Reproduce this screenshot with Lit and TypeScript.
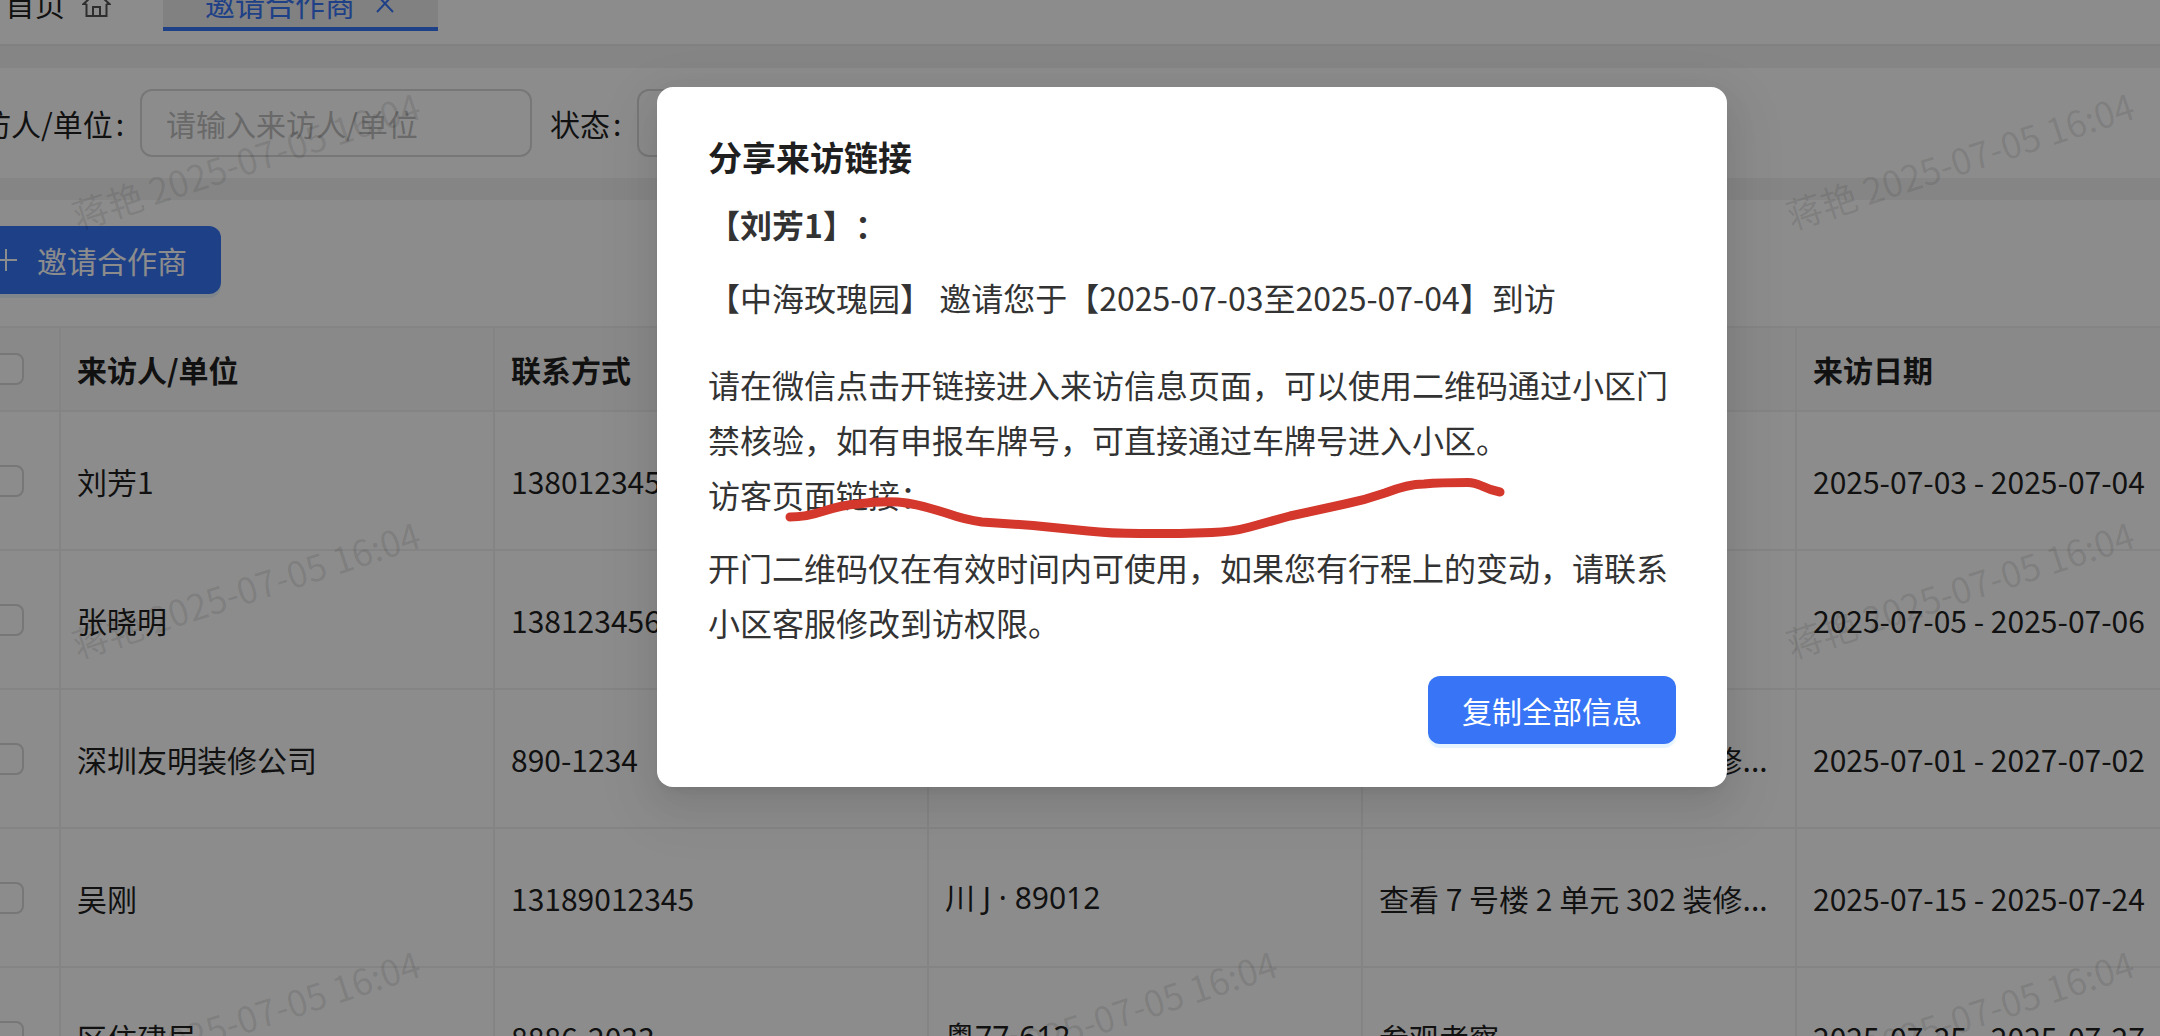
import { LitElement, html, css, svg } from "lit";
import { customElement, state } from "lit/decorators.js";

interface Visitor {
  name: string;
  phone: string;
  plate: string;
  purpose: string;
  period: string;
}

const VISITORS: Visitor[] = [
  { name: "刘芳1", phone: "13801234567", plate: "", purpose: "", period: "2025-07-03 - 2025-07-04" },
  { name: "张晓明", phone: "13812345678", plate: "", purpose: "", period: "2025-07-05 - 2025-07-06" },
  { name: "深圳友明装修公司", phone: "890-1234", plate: "", purpose: "查看 7 号楼 2 单元 302 装修...", period: "2025-07-01 - 2027-07-02" },
  { name: "吴刚", phone: "13189012345", plate: "川 J · 89012", purpose: "查看 7 号楼 2 单元 302 装修...", period: "2025-07-15 - 2025-07-24" },
  { name: "区住建局", phone: "8886-2033", plate: "粤77-612", purpose: "参观考察", period: "2025-07-25 - 2025-07-27" },
];

const WATERMARK = "蒋艳 2025-07-05 16:04";

const homeIcon = svg`<path d="M4.500 15 H1.500 L14.500 3 L27.500 15 H24.500 M4.500 15 V27 H24.500 V15 M11 27 V18 H18 V27" />`;
const closeIcon = svg`<path d="M1 1 L17 18 M17 1 L1 18" />`;
const plusIcon = svg`<path d="M15 4 V26 M4 15 H26" />`;

@customElement("app-root")
export class AppRoot extends LitElement {
  @state() private open = true;

  static styles = css`
    :host {
      display: block;
      position: relative;
      height: 100vh;
      overflow: hidden;
      background: #f3f3f3;
      color: #1f1f1f;
      font-family: "Noto Sans CJK SC", "Liberation Sans", sans-serif;
      font-size: 30px;
      line-height: 48px;
      text-spacing-trim: space-all;
    }
    * {
      box-sizing: border-box;
    }
    button,
    input,
    select {
      font: inherit;
      color: inherit;
      margin: 0;
    }
    svg {
      display: block;
      flex: none;
      fill: none;
      stroke: currentColor;
      stroke-width: 2;
    }
    .page {
      display: flex;
      flex-direction: column;
      gap: 22px;
      margin: -40px 0 0 -75px;
    }
    .topbar {
      display: flex;
      align-items: flex-start;
      height: 86px;
      padding: 19px 0 0 80px;
      background: #fff;
      border-bottom: 2px solid #ececec;
    }
    .tab {
      display: flex;
      align-items: center;
      height: 48px;
      color: inherit;
      text-decoration: none;
    }
    .tab.home {
      gap: 17px;
      padding-right: 52px;
    }
    .tab.home svg {
      color: #555;
    }
    .tab-box {
      display: flex;
      border-bottom: 4px solid #3875f6;
      background: #ececec;
      color: #3875f6;
    }
    .tab-box .tab {
      padding-left: 42px;
    }
    .close {
      display: flex;
      align-items: center;
      padding: 0 44px 0 21px;
      border: 0;
      background: none;
    }
    .filters {
      display: flex;
      align-items: center;
      gap: 18px;
      height: 110px;
      padding: 0 26px;
      background: #fff;
    }
    .field {
      display: flex;
      align-items: center;
      gap: 16px;
    }
    .colon {
      padding-left: 3px;
    }
    .control {
      width: 392px;
      height: 68px;
      padding: 0 24px;
      border: 2px solid #d9d9d9;
      border-radius: 12px;
      background: #fff;
      appearance: none;
    }
    .control::placeholder {
      color: #bfbfbf;
      opacity: 1;
    }
    .list {
      display: flex;
      flex-direction: column;
      align-items: flex-start;
      gap: 32px;
      padding: 26px 0 0 32px;
      background: #fff;
    }
    .primary {
      display: flex;
      align-items: center;
      gap: 16px;
      height: 68px;
      padding: 0 34px;
      border: 0;
      border-radius: 12px;
      background: #3875f6;
      box-shadow: 0 4px 0 rgba(5, 145, 255, 0.1);
      color: #fff;
    }
    .table {
      width: 100%;
      table-layout: fixed;
      border-collapse: separate;
      border-spacing: 0;
      border-top: 2px solid #f0f0f0;
    }
    .check-col {
      width: 104px;
    }
    .wide-col {
      width: 434px;
    }
    th,
    td {
      height: 139px;
      padding: 0 16px;
      border-right: 2px solid #f0f0f0;
      border-bottom: 2px solid #f0f0f0;
      text-align: left;
      white-space: nowrap;
    }
    th:last-child,
    td:last-child {
      border-right: 0;
    }
    th {
      height: 84px;
      background: #fafafa;
      font-weight: 700;
    }
    .check {
      padding: 0;
    }
    .plate {
      font-family: "Noto Sans", "Noto Sans CJK SC", sans-serif;
    }
    .box {
      display: block;
      width: 32px;
      height: 32px;
      margin: 0 auto;
      appearance: none;
      border: 2px solid #d9d9d9;
      border-radius: 8px;
      background: #fff;
    }
    .watermarks {
      position: absolute;
      top: -56px;
      left: -183px;
      display: grid;
      grid-template-columns: repeat(3, 857px);
      grid-auto-rows: 429px;
      place-items: center;
      color: rgba(0, 0, 0, 0.1);
      font-size: 36px;
      pointer-events: none;
    }
    .watermarks span {
      transform: rotate(-18deg);
    }
    .mask {
      position: absolute;
      inset: 0;
      display: flex;
      justify-content: center;
      align-items: flex-start;
      padding: 87px 0 0 224px;
      background: rgba(0, 0, 0, 0.45);
    }
    .dialog {
      position: relative;
      display: flex;
      flex-direction: column;
      width: 1070px;
      padding: 42px 51px 43px;
      border-radius: 16px;
      background: #fff;
      box-shadow:
        0 12px 32px 0 rgba(0, 0, 0, 0.08),
        0 6px 12px -8px rgba(0, 0, 0, 0.12),
        0 18px 56px 16px rgba(0, 0, 0, 0.05);
      color: #333;
      font-size: 32px;
      line-height: 55px;
    }
    .dialog h2 {
      margin: 0 0 12px;
      color: #1f1f1f;
      font-size: 34px;
      font-weight: 700;
      line-height: 56px;
    }
    .dialog p {
      margin: 0 0 18px;
    }
    .dialog .invite {
      margin-bottom: 32px;
    }
    .actions {
      display: flex;
      justify-content: flex-end;
      padding-top: 8px;
      font-size: 30px;
    }
    .scribble {
      position: absolute;
      top: 388px;
      left: 126px;
      stroke: #d4372b;
      stroke-width: 9;
      stroke-linecap: round;
      stroke-linejoin: round;
      pointer-events: none;
    }
  `;

  private close() {
    this.open = false;
  }

  private renderDialog() {
    return html`
      <div class="mask">
        <section class="dialog" role="dialog" aria-modal="true" aria-labelledby="share-title">
          <h2 id="share-title">分享来访链接</h2>
          <p><strong>【刘芳1】：</strong></p>
          <p class="invite">【中海玫瑰园】 邀请您于【2025-07-03至2025-07-04】到访</p>
          <p>
            请在微信点击开链接进入来访信息页面，可以使用二维码通过小区门禁核验，如有申报车牌号，可直接通过车牌号进入小区。<br />访客页面链接：
          </p>
          <p>开门二维码仅在有效时间内可使用，如果您有行程上的变动，请联系小区客服修改到访权限。</p>
          <div class="actions">
            <button class="primary" type="button" @click=${this.close}>复制全部信息</button>
          </div>
          <svg class="scribble" width="730" height="66" viewBox="783 475 730 66" aria-hidden="true">
            <path
              d="M790 517 Q806 517 824 511 T858 504 Q878 501 898 502 Q914 503 946 513 Q966 520 982 522 L1033 525.500 L1088 531 Q1110 533.500 1140 533.500 L1180 533.500 L1212 532.500 Q1232 532 1250 527 L1290 516 L1345 504 Q1365 500 1385 493 Q1408 484 1424 484 Q1440 482.500 1468 482.500 Q1474 482.500 1482 486 Q1490 490 1500 492"
            />
          </svg>
        </section>
      </div>
    `;
  }

  render() {
    return html`
      <div class="page">
        <nav class="topbar">
          <a class="tab home" href="#home">
            首页
            <svg width="29" height="29" viewBox="0 0 29 29" aria-hidden="true">${homeIcon}</svg>
          </a>
          <div class="tab-box">
            <a class="tab" href="#partners">邀请合作商</a>
            <button class="close" type="button" aria-label="关闭">
              <svg width="18" height="19" viewBox="0 0 18 19" aria-hidden="true">${closeIcon}</svg>
            </button>
          </div>
        </nav>

        <form class="filters">
          <div class="field">
            <label for="visitor">来访人/单位<span class="colon">:</span></label>
            <input class="control" id="visitor" type="text" placeholder="请输入来访人/单位" />
          </div>
          <div class="field">
            <label for="status">状态<span class="colon">:</span></label>
            <select class="control" id="status"></select>
          </div>
        </form>

        <main class="list">
          <button class="primary" type="button">
            <svg width="30" height="30" viewBox="0 0 30 30" aria-hidden="true">${plusIcon}</svg>
            邀请合作商
          </button>
          <table class="table">
            <colgroup>
              <col class="check-col" />
              <col class="wide-col" />
              <col class="wide-col" />
              <col class="wide-col" />
              <col class="wide-col" />
              <col />
            </colgroup>
            <thead>
              <tr>
                <th class="check"><input class="box" type="checkbox" aria-label="全选" /></th>
                <th>来访人/单位</th>
                <th>联系方式</th>
                <th>车牌号</th>
                <th>来访事由</th>
                <th>来访日期</th>
              </tr>
            </thead>
            <tbody>
              ${VISITORS.map(
                (v) => html`
                  <tr>
                    <td class="check"><input class="box" type="checkbox" aria-label=${v.name} /></td>
                    <td>${v.name}</td>
                    <td>${v.phone}</td>
                    <td class="plate">${v.plate}</td>
                    <td>${v.purpose}</td>
                    <td>${v.period}</td>
                  </tr>
                `
              )}
            </tbody>
          </table>
        </main>
      </div>

      <div class="watermarks" aria-hidden="true">
        ${Array.from({ length: 9 }, () => html`<span>${WATERMARK}</span>`)}
      </div>

      ${this.open ? this.renderDialog() : null}
    `;
  }
}
